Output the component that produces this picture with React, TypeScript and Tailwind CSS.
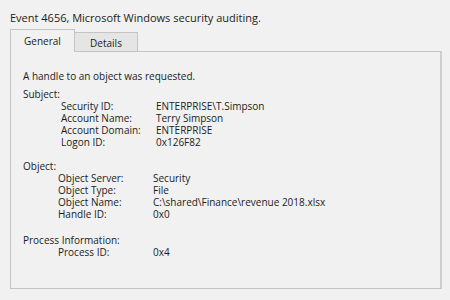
import React from 'react';

const subject = [
  { label: 'Security ID:', value: 'ENTERPRISE\\T.Simpson' },
  { label: 'Account Name:', value: 'Terry Simpson' },
  { label: 'Account Domain:', value: 'ENTERPRISE' },
  { label: 'Logon ID:', value: '0x126F82' },
];

const objectRows = [
  { label: 'Object Server:', value: 'Security' },
  { label: 'Object Type:', value: 'File' },
  { label: 'Object Name:', value: 'C:\\shared\\Finance\\revenue 2018.xlsx' },
  { label: 'Handle ID:', value: '0x0' },
];

function Row({ label, value, indent }: { label: string; value: string; indent: string }) {
  return (
    <div className={`flex h-[12px] leading-[12px] ${indent}`}>
      <span className="w-[95px] shrink-0">{label}</span>
      <span>{value}</span>
    </div>
  );
}

export default function App() {
  return (
    <div
      className="w-[450px] h-[300px] bg-[#f0f1f0] text-[#1c1c1c] text-[10px] overflow-hidden"
      style={{ fontFamily: '"Open Sans", "Noto Sans", sans-serif' }}
    >
      <div className="pl-[10px] pt-[11px] h-[29px] leading-[14px] text-[11px]">
        Event 4656, Microsoft Windows security auditing.
      </div>

      <div className="flex pl-[10px] items-end relative z-10">
        <div className="w-[65px] h-[23px] border border-b-0 border-[#c4c4c4] bg-[#f0f1f0] flex justify-center pt-[4px] leading-[14px]">
          General
        </div>
        <div className="w-[64px] h-[19px] -ml-px border border-b-0 border-[#c4c4c4] bg-[#e4e5e4] flex justify-center pt-[3px] leading-[14px] mb-px">
          Details
        </div>
      </div>

      <div className="ml-[10px] w-[432px] h-[238px] -mt-px border border-[#c4c4c4] border-r-2 border-r-[#cfcfcf] pl-[12px] pt-[18px] leading-[12px]">
        <div className="h-[12px]">A handle to an object was requested.</div>

        <div className="h-[12px] mt-[6px]">Subject:</div>
        {subject.map((r) => (
          <Row key={r.label} {...r} indent="pl-[38px]" />
        ))}

        <div className="h-[12px] mt-[12px]">Object:</div>
        {objectRows.map((r) => (
          <Row key={r.label} {...r} indent="pl-[35px]" />
        ))}

        <div className="h-[12px] mt-[14px]">Process Information:</div>
        <Row label="Process ID:" value="0x4" indent="pl-[35px]" />
      </div>
    </div>
  );
}
